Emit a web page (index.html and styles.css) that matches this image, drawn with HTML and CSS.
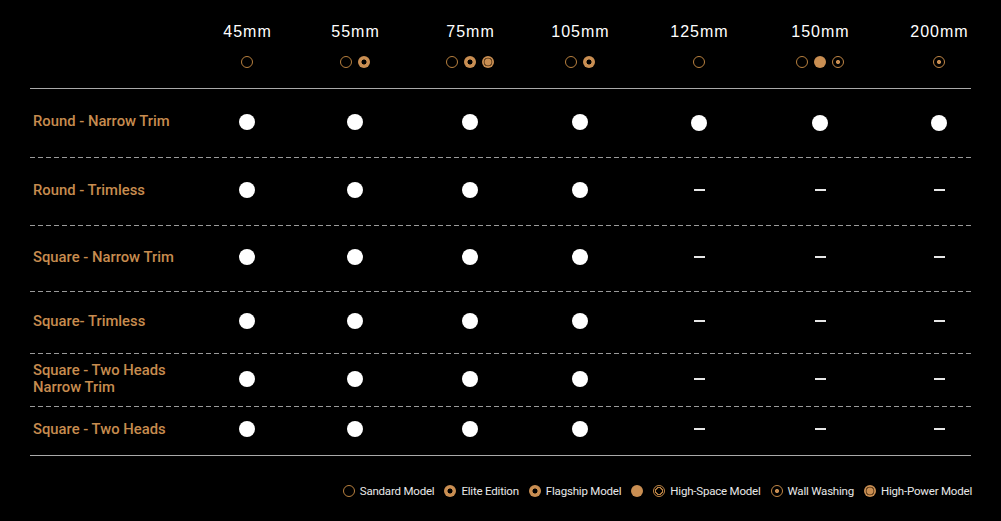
FILE: index.html
```html
<!DOCTYPE html>
<html>
<head>
<meta charset="utf-8">
<link rel="stylesheet" href="styles.css">
</head>
<body>
<div class="page">
  <div class="table">
    <div class="row head">
      <div class="cell label"></div>
      <div class="cell hcell"><div class="size">45mm</div><div class="icons"><span class="ic std"></span></div></div>
      <div class="cell hcell"><div class="size">55mm</div><div class="icons"><span class="ic std"></span><span class="ic elite"></span></div></div>
      <div class="cell hcell"><div class="size">75mm</div><div class="icons"><span class="ic std"></span><span class="ic elite"></span><span class="ic power"></span></div></div>
      <div class="cell hcell"><div class="size">105mm</div><div class="icons"><span class="ic std"></span><span class="ic elite"></span></div></div>
      <div class="cell hcell"><div class="size">125mm</div><div class="icons"><span class="ic std"></span></div></div>
      <div class="cell hcell"><div class="size">150mm</div><div class="icons"><span class="ic std"></span><span class="ic solid"></span><span class="ic wall"></span></div></div>
      <div class="cell hcell"><div class="size">200mm</div><div class="icons"><span class="ic wall"></span></div></div>
    </div>

    <div class="row dashed r1">
      <div class="cell label">Round - Narrow Trim</div>
      <div class="cell"><span class="dot"></span></div>
      <div class="cell"><span class="dot"></span></div>
      <div class="cell"><span class="dot"></span></div>
      <div class="cell"><span class="dot"></span></div>
      <div class="cell low"><span class="dot"></span></div>
      <div class="cell low"><span class="dot"></span></div>
      <div class="cell low"><span class="dot"></span></div>
    </div>

    <div class="row dashed r2">
      <div class="cell label">Round - Trimless</div>
      <div class="cell"><span class="dot"></span></div>
      <div class="cell"><span class="dot"></span></div>
      <div class="cell"><span class="dot"></span></div>
      <div class="cell"><span class="dot"></span></div>
      <div class="cell"><span class="dash"></span></div>
      <div class="cell"><span class="dash"></span></div>
      <div class="cell"><span class="dash"></span></div>
    </div>

    <div class="row dashed r3">
      <div class="cell label">Square - Narrow Trim</div>
      <div class="cell"><span class="dot"></span></div>
      <div class="cell"><span class="dot"></span></div>
      <div class="cell"><span class="dot"></span></div>
      <div class="cell"><span class="dot"></span></div>
      <div class="cell"><span class="dash"></span></div>
      <div class="cell"><span class="dash"></span></div>
      <div class="cell"><span class="dash"></span></div>
    </div>

    <div class="row dashed r4">
      <div class="cell label">Square- Trimless</div>
      <div class="cell"><span class="dot"></span></div>
      <div class="cell"><span class="dot"></span></div>
      <div class="cell"><span class="dot"></span></div>
      <div class="cell"><span class="dot"></span></div>
      <div class="cell"><span class="dash"></span></div>
      <div class="cell"><span class="dash"></span></div>
      <div class="cell"><span class="dash"></span></div>
    </div>

    <div class="row dashed r5">
      <div class="cell label">Square - Two Heads<br>Narrow Trim</div>
      <div class="cell"><span class="dot"></span></div>
      <div class="cell"><span class="dot"></span></div>
      <div class="cell"><span class="dot"></span></div>
      <div class="cell"><span class="dot"></span></div>
      <div class="cell"><span class="dash"></span></div>
      <div class="cell"><span class="dash"></span></div>
      <div class="cell"><span class="dash"></span></div>
    </div>

    <div class="row solidline r6">
      <div class="cell label">Square - Two Heads</div>
      <div class="cell"><span class="dot"></span></div>
      <div class="cell"><span class="dot"></span></div>
      <div class="cell"><span class="dot"></span></div>
      <div class="cell"><span class="dot"></span></div>
      <div class="cell"><span class="dash"></span></div>
      <div class="cell"><span class="dash"></span></div>
      <div class="cell"><span class="dash"></span></div>
    </div>
  </div>

  <div class="legend">
    <div class="item"><span class="ic std"></span><span class="lt">Sandard Model</span></div>
    <div class="item"><span class="ic elite"></span><span class="lt">Elite Edition</span></div>
    <div class="item"><span class="ic elite"></span><span class="lt">Flagship Model</span></div>
    <div class="item"><span class="ic solid"></span></div>
    <div class="item"><span class="ic space"></span><span class="lt">High-Space Model</span></div>
    <div class="item"><span class="ic wall"></span><span class="lt">Wall Washing</span></div>
    <div class="item"><span class="ic power"></span><span class="lt">High-Power Model</span></div>
  </div>
</div>
</body>
</html>
```

FILE: styles.css
```css
* { box-sizing: border-box; }
html, body {
  margin: 0;
  padding: 0;
  background: #000;
  width: 1001px;
  height: 521px;
  overflow: hidden;
}
.page {
  padding-left: 30px;
  width: 971px;
}
.table {
  width: 941px;
}
.row {
  display: grid;
  grid-template-columns: 163px 108px 108px 122px 98px 140px 102px 136px;
  width: 941px;
  align-items: center;
}
.head {
  height: 89px;
  border-bottom: 1px solid #a9a9a9;
  align-items: start;
}
.dashed {
  background-image: linear-gradient(to right, #9a9a9a 0 5px, transparent 5px 8px);
  background-size: 8px 1px;
  background-repeat: repeat-x;
  background-position: left bottom;
}
.solidline {
  border-bottom: 1px solid #a9a9a9;
}
.r1 { height: 69px; }
.r2 { height: 68px; }
.r3 { height: 66px; }
.r4 { height: 62px; }
.r5 { height: 53px; }
.r6 { height: 49px; }
.row.dashed, .row.solidline { padding-bottom: 4px; }
.r5 { padding-bottom: 6px; }

.cell {
  display: flex;
  justify-content: center;
  align-items: center;
}
.cell.label {
  justify-content: flex-start;
  padding-left: 3px;
  font-family: Roboto, "Noto Sans", sans-serif;
  font-weight: 500;
  font-size: 14.8px;
  line-height: 17px;
  color: #c78c4f;
}
.cell.low { padding-top: 3px; }
.hcell {
  flex-direction: column;
  justify-content: flex-start;
  padding-top: 23px;
}
.size {
  font-family: "Liberation Sans", Arial, sans-serif;
  font-size: 16px;
  line-height: 18px;
  letter-spacing: 1px;
  color: #fff;
  padding-left: 1px;
}
.icons {
  display: flex;
  gap: 6px;
  margin-top: 15px;
  height: 12px;
}
.ic {
  display: inline-block;
  width: 12px;
  height: 12px;
  border-radius: 50%;
  flex: none;
}
.ic.std {
  border: 1px solid #b8803f;
}
.ic.elite {
  background: radial-gradient(circle at center, #000 0 2.2px, #c98e52 2.8px);
}
.ic.solid {
  background: #c98e52;
}
.ic.power {
  background: radial-gradient(circle at center, #c98e52 0 3.3px, #6b4722 3.6px 4.3px, #c98e52 4.6px);
}
.ic.wall {
  border: 1px solid #c08646;
  background: radial-gradient(circle at center, #c98e52 0 1.8px, transparent 2.3px);
}
.ic.space {
  border: 1px solid #c08646;
  background: radial-gradient(circle at center, transparent 0 2.6px, #c08646 3px 3.8px, transparent 4.2px);
}
.dot {
  display: block;
  width: 16px;
  height: 16px;
  border-radius: 50%;
  background: #fff;
}
.dash {
  display: block;
  width: 11px;
  height: 2px;
  background: #e6e6e6;
}
.legend {
  display: flex;
  justify-content: flex-end;
  align-items: center;
  gap: 10px;
  margin-top: 28px;
  width: 942px;
  font-family: Roboto, "Noto Sans", sans-serif;
  font-size: 11.5px;
  letter-spacing: -0.2px;
  line-height: 14px;
  color: #e8e8e8;
}
.item {
  display: flex;
  align-items: center;
  gap: 5px;
}
.item .ic { width: 12px; height: 12px; }
```
